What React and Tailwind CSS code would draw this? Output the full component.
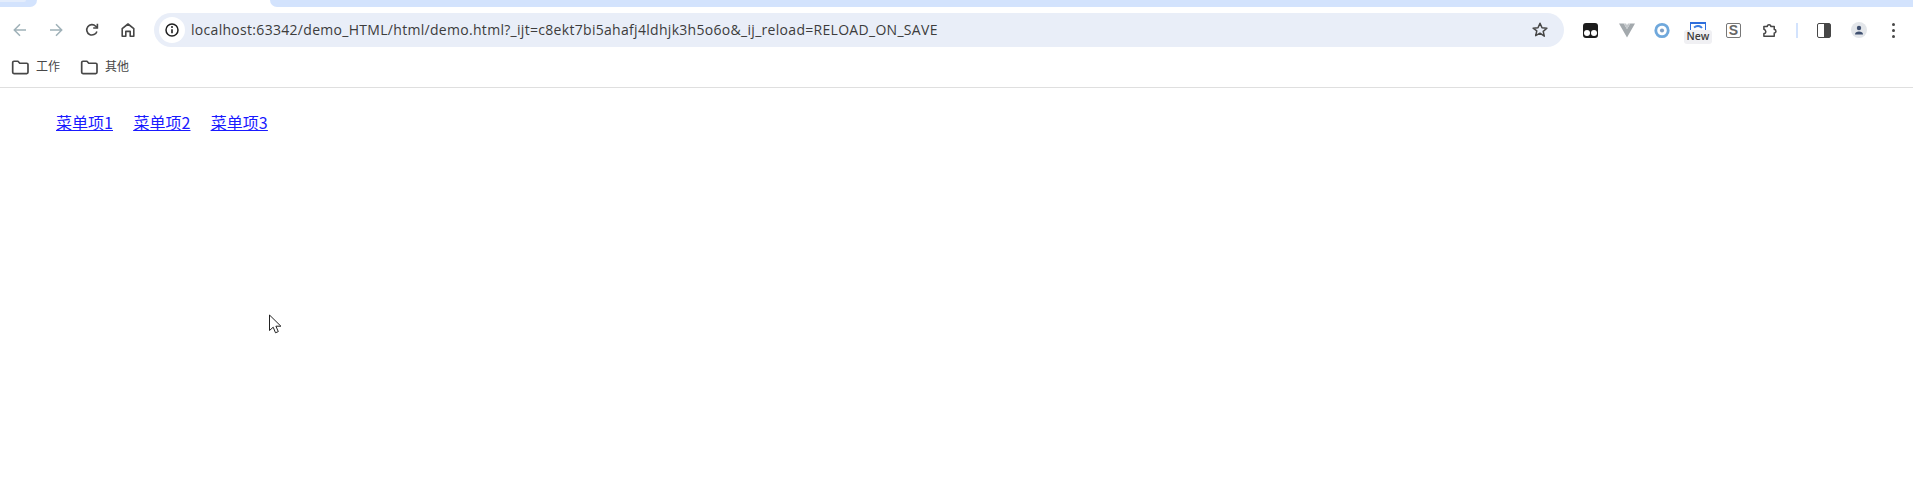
import React from "react";

const Folder = () => (
  <svg width="19" height="19" viewBox="0 0 18 18" fill="none" stroke="#474747" strokeWidth="1.6" strokeLinejoin="round">
    <path d="M1.6 4.3c0-.7.5-1.2 1.2-1.2h3.8l1.7 1.9h6.6c.7 0 1.2.5 1.2 1.2v7.4c0 .7-.5 1.2-1.2 1.2H2.8c-.7 0-1.2-.5-1.2-1.2z" />
  </svg>
);

const Slot = ({ children, className = "" }) => (
  <div className={`flex items-center justify-center shrink-0 ${className}`}>{children}</div>
);

export default function App() {
  return (
    <div className="relative h-[482px] w-[1913px] overflow-hidden bg-white" style={{ fontFamily: '"Open Sans","Noto Sans CJK SC",sans-serif' }}>
      {/* tab strip */}
      <div className="flex h-[7px] bg-white">
        <div className="w-[37px] rounded-br-[10px] bg-[#d3e3fd]">
          <div className="h-[2px] w-[26px] rounded-br-[6px] bg-[#e4edfc]" />
        </div>
        <div className="w-[233px]" />
        <div className="flex-1 rounded-bl-[10px] bg-[#d3e3fd]" />
      </div>

      {/* toolbar */}
      <div className="flex h-[40px] items-center pt-[6px]">
        <div className="flex w-[154px] shrink-0 items-center pl-[10px]">
          <Slot className="h-5 w-5">
            <svg width="16" height="16" viewBox="0 0 16 16" fill="none" stroke="#9fb1b8" strokeWidth="1.5"><path d="M14 8H2.5M8 2.3 2.3 8 8 13.7" /></svg>
          </Slot>
          <Slot className="ml-[16px] h-5 w-5">
            <svg width="16" height="16" viewBox="0 0 16 16" fill="none" stroke="#9fb1b8" strokeWidth="1.5"><path d="M2 8h11.5M8 2.3 13.7 8 8 13.7" /></svg>
          </Slot>
          <Slot className="ml-[16px] h-5 w-5">
            <svg width="16" height="16" viewBox="0 0 16 16" fill="none" stroke="#474747" strokeWidth="1.6"><path d="M12.9 9.4A5.2 5.2 0 1 1 11.7 4.2L13.2 5.6" /><path d="M13.4 1.8v4.2H9.2" fill="none" /></svg>
          </Slot>
          <Slot className="ml-[16px] h-5 w-5">
            <svg width="16" height="16" viewBox="0 0 16 16" fill="none" stroke="#474747" strokeWidth="1.6" strokeLinejoin="round"><path d="M2.2 14.2V6.6L8 2l5.8 4.6v7.6h-3.6V9.4H5.8v4.8z" /></svg>
          </Slot>
        </div>

        {/* omnibox */}
        <div className="flex h-[34px] w-[1410px] shrink-0 items-center rounded-[17px] bg-[#e9eef8] pl-[5px] pr-[15px]">
          <div className="flex h-[26px] w-[26px] items-center justify-center rounded-full bg-white">
            <svg width="16" height="16" viewBox="0 0 16 16" fill="none">
              <circle cx="8" cy="8" r="6" stroke="#1f1f1f" strokeWidth="1.5" />
              <path d="M8 7.3v4" stroke="#1f1f1f" strokeWidth="1.6" />
              <circle cx="8" cy="5" r="1" fill="#1f1f1f" />
            </svg>
          </div>
          <span className="ml-[6px] flex-1 pb-[2px] text-[14px] tracking-[0.3px] text-[#3c3c3c]">localhost:63342/demo_HTML/html/demo.html?_ijt=c8ekt7bi5ahafj4ldhjk3h5o6o&amp;_ij_reload=RELOAD_ON_SAVE</span>
          <svg width="18" height="18" viewBox="0 0 18 18" fill="none" stroke="#474747" strokeWidth="1.5" strokeLinejoin="round">
            <path d="M9 2.2l2 4.5 4.9.5-3.7 3.2 1.1 4.8L9 12.2l-4.3 2.5 1.1-4.8L2.1 7.2 7 6.7z" />
          </svg>
        </div>

        {/* extensions */}
        <div className="flex flex-1 items-center pl-[19px]">
          <Slot className="h-[15px] w-[15px] rounded-[3px] bg-[#1c1c1c]">
            <div className="mt-[5px] flex gap-[1px]">
              <div className="h-[6px] w-[6px] rounded-full bg-white" />
              <div className="h-[6px] w-[6px] rounded-full bg-white" />
            </div>
          </Slot>
          <Slot className="ml-[21px] h-4 w-4">
            <svg width="17" height="15" viewBox="0 0 17 15"><path d="M0 0h5l3.5 6L12 0h5L8.5 15z" fill="#a3a9ad" /><path d="M5 0h2.5l1 2 1-2H12L8.5 6z" fill="#c3c7ca" /></svg>
          </Slot>
          <Slot className="ml-[19px] h-4 w-4">
            <svg width="17" height="17" viewBox="0 0 17 17" fill="none"><circle cx="8.5" cy="8.5" r="6.6" stroke="#6fa8dc" strokeWidth="3" /><circle cx="8.5" cy="8.5" r="2.2" fill="#7f9fc4" /></svg>
          </Slot>
          <div className="relative ml-[20px] h-[17px] w-4 shrink-0 border-x-[1.5px] border-t-[2px] border-[#2f6fdc]">
            <svg className="absolute left-[2px] top-[1px]" width="10" height="6" viewBox="0 0 10 6" fill="none"><path d="M1 2.5C4 .5 7 .5 9 3" stroke="#3f7fe0" strokeWidth="2" /></svg>
            <div className="absolute left-[-7px] top-[6px] flex h-[14px] w-[28px] items-center justify-center rounded-[3px] bg-[#f0f0f3] text-[10.5px] font-semibold leading-none text-[#3c3c3c]">New</div>
          </div>
          <Slot className="ml-[20px] h-[15px] w-[15px] rounded-[2px] border border-[#777]">
            <span className="text-[14px] font-bold leading-none text-[#666]" style={{ fontFamily: '"Liberation Sans",sans-serif' }}>S</span>
          </Slot>
          <Slot className="ml-[21px] h-4 w-4">
            <svg width="17" height="17" viewBox="0 0 17 17" fill="none" stroke="#474747" strokeWidth="1.6" strokeLinejoin="round"><path d="M2 4.2h3.6a1.9 1.9 0 0 1 3.8 0H13v3.3a1.8 1.8 0 0 1 0 3.6v3.6H2v-2.9a1.9 1.9 0 0 0 1.5-3.2A1.9 1.9 0 0 0 2 7.2z" /></svg>
          </Slot>
          <div className="ml-[18px] h-[15px] w-[2px] shrink-0 bg-[#d3e3fd]" />
          <Slot className="ml-[19px] h-[15px] w-[14px] rounded-[2px] border-[1.5px] border-[#474747]">
            <div className="ml-auto h-full w-[6px] bg-[#474747]" />
          </Slot>
          <Slot className="ml-[20px] h-4 w-4 rounded-full bg-[#e3e6ea]">
            <svg width="10" height="10" viewBox="0 0 10 10" fill="#3f4f6f"><circle cx="5" cy="3" r="2.2" /><path d="M1 9.4c0-2.2 1.8-3 4-3s4 .8 4 3z" /></svg>
          </Slot>
          <div className="ml-[25px] flex shrink-0 flex-col gap-[3px]">
            <div className="h-[3px] w-[3px] rounded-full bg-[#474747]" />
            <div className="h-[3px] w-[3px] rounded-full bg-[#474747]" />
            <div className="h-[3px] w-[3px] rounded-full bg-[#474747]" />
          </div>
        </div>
      </div>

      {/* bookmarks */}
      <div className="flex h-[41px] items-center border-b border-[#dfdfdf] pl-[11px] text-[12px] text-[#474747]">
        <Folder />
        <span className="ml-[6px]">工作</span>
        <div className="ml-[20px]"><Folder /></div>
        <span className="ml-[6px]">其他</span>
      </div>

      {/* page */}
      <div className="flex gap-[20.5px] pl-[56px] pt-[22px] text-[16px] leading-[25px] text-[#1a1aff] underline" style={{ fontFamily: '"Noto Sans CJK SC",sans-serif' }}>
        <a href="#">菜单项1</a>
        <a href="#">菜单项2</a>
        <a href="#">菜单项3</a>
      </div>

      {/* mouse cursor */}
      <svg className="absolute left-[268px] top-[314px]" width="16" height="22" viewBox="0 0 16 22" fill="#fff" stroke="#222" strokeWidth="1" strokeLinejoin="round">
        <path d="M1.5 1v15.5l3.7-3.3 2.3 5.6 2.8-1.2-2.4-5.4h5z" />
      </svg>
    </div>
  );
}
